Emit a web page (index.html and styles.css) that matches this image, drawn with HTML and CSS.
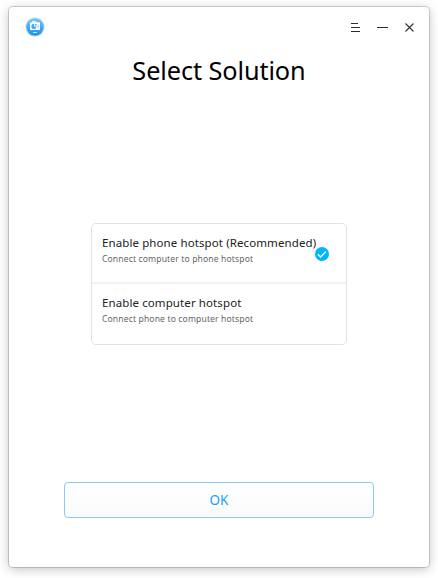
FILE: index.html
```html
<!DOCTYPE html>
<html lang="en">
<head>
<meta charset="utf-8">
<title>Select Solution</title>
<link rel="stylesheet" href="styles.css">
</head>
<body>
<main class="window">
  <header class="titlebar">
    <svg class="logo" width="20" height="20" viewBox="0 0 20 20" aria-hidden="true">
      <defs><linearGradient id="g" x1="0" y1="0" x2="0" y2="1"><stop offset="0" stop-color="#6cc8fb"/><stop offset="1" stop-color="#1691f5"/></linearGradient></defs>
      <circle cx="10" cy="10" r="9.8" fill="#dcdfe2"/>
      <circle cx="10" cy="10" r="8.700" fill="url(#g)"/>
      <path d="M7 3.900h4v1.600H7z" fill="#d8efff"/>
      <rect x="5" y="5.300" width="10" height="7.700" rx=".7" fill="#fff"/>
      <path d="M9 6.700v2.700h2.500A2.600 2.600 0 1 1 9 6.700z" fill="#3aa6f5"/>
      <path d="M10 6.700a2.200 2.200 0 0 1 1.900 1.900H10z" fill="#3aa6f5"/>
      <path d="M13 7.500v4" stroke="#7cc5f8" stroke-width=".8"/>
      <path d="M8 15.500h4" stroke="#d8efff" stroke-width=".9"/>
    </svg>
    <nav class="controls">
      <svg width="9" height="10" viewBox="0 0 9 10" shape-rendering="crispEdges"><path d="M0 .5h7M0 4.500h9M0 8.500h9" stroke="#2c2c2c"/></svg>
      <svg width="11" height="10" viewBox="0 0 11 10" shape-rendering="crispEdges"><path d="M0 4.500h11" stroke="#2c2c2c"/></svg>
      <svg width="9" height="10" viewBox="0 0 9 10"><path d="M.5 .5l8 8M8.500 .5l-8 8" stroke="#333" stroke-width="1.1"/></svg>
    </nav>
  </header>
  <h1 class="heading">Select Solution</h1>
  <section class="options">
    <div class="option">
      <div class="label">
        <div class="name">Enable phone hotspot (Recommended)</div>
        <div class="hint">Connect computer to phone hotspot</div>
      </div>
      <svg class="check" width="14" height="14" viewBox="0 0 14 14"><circle cx="7" cy="7" r="7" fill="#00b7ff"/><path d="M2.900 7.200l2.700 2.700 5.300-5.300" fill="none" stroke="#fff" stroke-width="1.4"/></svg>
    </div>
    <div class="option">
      <div class="label">
        <div class="name">Enable computer hotspot</div>
        <div class="hint">Connect phone to computer hotspot</div>
      </div>
    </div>
  </section>
  <button class="ok" type="button">OK</button>
</main>
</body>
</html>
```
FILE: styles.css
```css
* { box-sizing: border-box; }
body {
  margin: 0;
  padding: 7px 9px 11px;
  height: 578px;
  background: #fff;
  font-family: "Noto Sans", sans-serif;
  overflow: hidden;
}
.window {
  width: 420px;
  height: 560px;
  display: flex;
  flex-direction: column;
  align-items: center;
  background: #fff;
  border-radius: 4px;
  box-shadow: 0 0 0 1px rgba(0, 0, 0, .16), 0 2px 11px rgba(0, 0, 0, .25);
}
.titlebar {
  width: 100%;
  height: 40px;
  padding: 0 15px 0 16px;
  display: flex;
  align-items: center;
  justify-content: space-between;
}
.controls {
  display: flex;
  align-items: center;
  gap: 17px;
  padding-top: 2px;
}
.heading {
  margin: 5px 0 0;
  font-size: 25.300px;
  line-height: 36px;
  font-weight: 400;
  letter-spacing: -.1px;
  color: #000;
  white-space: nowrap;
}
.options {
  width: 256px;
  height: 122px;
  margin-top: 135px;
  border: 1px solid #e3e3e3;
  border-radius: 5px;
}
.option {
  height: 60px;
  padding: 11px 17px 0 10px;
  display: flex;
  justify-content: space-between;
}
.option:first-child { border-bottom: 2px solid #f2f2f2; }
.label { width: 213px; flex: none; }
.name {
  font-size: 11.500px;
  line-height: 16px;
  letter-spacing: .1px;
  color: #222;
  white-space: nowrap;
}
.hint {
  font-size: 8.600px;
  line-height: 16px;
  letter-spacing: .12px;
  color: #666;
  white-space: nowrap;
}
.check { flex: none; margin-top: 12px; }
.ok {
  width: 310px;
  height: 36px;
  margin-top: 137px;
  padding: 0;
  border: 1px solid #8fc7fa;
  border-radius: 4px;
  background: linear-gradient(#fff, #fafafa);
  font: 13.500px/34px "Noto Sans", sans-serif;
  color: #18a4f4;
}
```
